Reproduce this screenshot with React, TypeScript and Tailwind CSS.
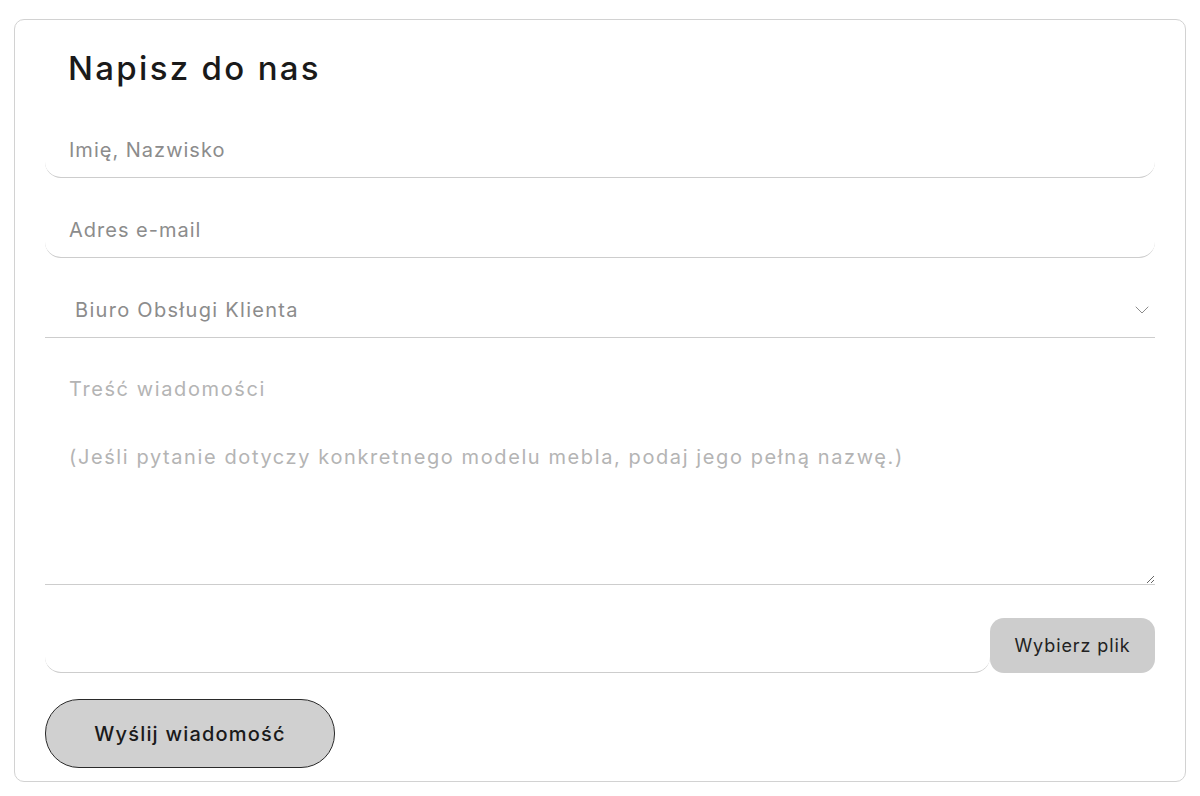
import { ChevronDown } from 'lucide-react';

const font = { fontFamily: 'Inter, "Noto Sans", sans-serif' };

export default function App() {
    return (
        <div className="min-h-[796px] bg-white pt-[19px] px-[14px]" style={font}>
            <form className="rounded-[10px] border border-[#d2d2d2] bg-white pt-[28px] pb-[13px] pl-[30px] pr-[30px]">
                <h2 className="mb-[34px] h-[40px] pl-[23px] text-[33px] leading-[40px] font-medium tracking-[0.07em] text-[#1a1a1a]">
                    Napisz do nas
                </h2>

                {/* Imię, Nazwisko */}
                <input
                    type="text"
                    placeholder="Imię, Nazwisko"
                    className="mb-6 block h-[56px] w-full rounded-b-2xl border-b border-[#cdcdcd] px-6 text-[20px] tracking-[0.05em] text-[#333] placeholder:text-[#8c8c8c] outline-none"
                />

                {/* Adres e-mail */}
                <input
                    type="email"
                    placeholder="Adres e-mail"
                    className="mb-6 block h-[56px] w-full rounded-b-2xl border-b border-[#cdcdcd] px-6 text-[20px] tracking-[0.05em] text-[#333] placeholder:text-[#8c8c8c] outline-none"
                />

                {/* Dział */}
                <div className="relative mb-6 flex h-[56px] w-full items-center border-b border-[#cdcdcd] pl-[30px] pr-[1px]">
                    <span className="flex-1 text-[20px] tracking-[0.065em] text-[#8c8c8c]">Biuro Obsługi Klienta</span>
                    <ChevronDown size={24} strokeWidth={1} className="text-[#8c8c8c]" />
                </div>

                {/* Treść */}
                <textarea
                    placeholder={
                        'Treść wiadomości\n\n(Jeśli pytanie dotyczy konkretnego modelu mebla, podaj jego pełną nazwę.)'
                    }
                    className="mb-6 block h-[223px] w-full border-b border-[#cdcdcd] px-6 pt-[10px] text-[20px] leading-[34px] tracking-[0.08em] text-[#333] placeholder:text-[#b4b4b4] outline-none"
                />

                {/* Plik */}
                <div className="mb-[26px] flex h-[64px] items-end">
                    <div className="h-full flex-1 rounded-b-2xl border-b border-[#cdcdcd]" />
                    <button
                        type="button"
                        className="h-[55px] w-[165px] rounded-[14px] bg-[#cdcdcd] text-[18px] tracking-[0.05em] text-[#222]"
                    >
                        Wybierz plik
                    </button>
                </div>

                <button
                    type="submit"
                    className="h-[69px] w-[290px] rounded-[34px] border border-[#2a2a2a] bg-[#d0d0d0] text-[20px] font-medium tracking-[0.06em] text-[#1a1a1a]"
                >
                    Wyślij wiadomość
                </button>
            </form>
        </div>
    );
}
